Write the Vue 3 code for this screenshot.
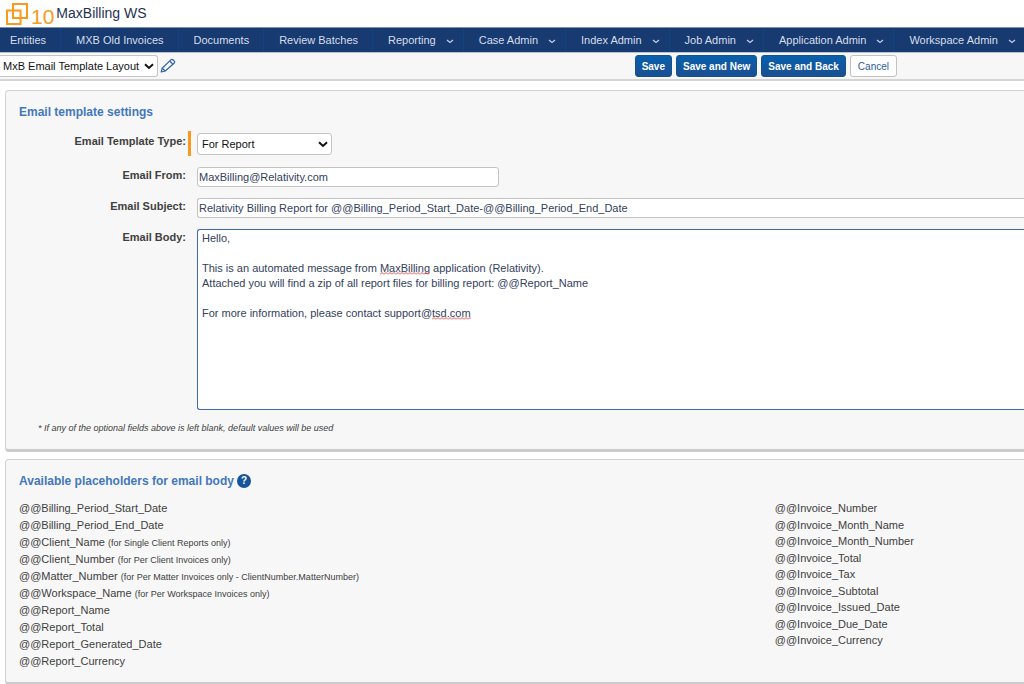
<script setup>
import { ref } from 'vue'

const tabs = [
  { name: 'Entities' },
  { name: 'MXB Old Invoices' },
  { name: 'Documents' },
  { name: 'Review Batches' },
  { name: 'Reporting', menu: true },
  { name: 'Case Admin', menu: true },
  { name: 'Index Admin', menu: true },
  { name: 'Job Admin', menu: true },
  { name: 'Application Admin', menu: true },
  { name: 'Workspace Admin', menu: true }
]

const layout = ref('MxB Email Template Layout')
const templateType = ref('For Report')
const from = ref('MaxBilling@Relativity.com')
const subject = ref('Relativity Billing Report for @@Billing_Period_Start_Date-@@Billing_Period_End_Date')
const body = ref(`Hello,

This is an automated message from MaxBilling application (Relativity).
Attached you will find a zip of all report files for billing report: @@Report_Name

For more information, please contact support@tsd.com`)

const general = [
  { name: '@@Billing_Period_Start_Date' },
  { name: '@@Billing_Period_End_Date' },
  { name: '@@Client_Name', note: '(for Single Client Reports only)' },
  { name: '@@Client_Number', note: '(for Per Client Invoices only)' },
  { name: '@@Matter_Number', note: '(for Per Matter Invoices only - ClientNumber.MatterNumber)' },
  { name: '@@Workspace_Name', note: '(for Per Workspace Invoices only)' },
  { name: '@@Report_Name' },
  { name: '@@Report_Total' },
  { name: '@@Report_Generated_Date' },
  { name: '@@Report_Currency' }
]
const invoice = [
  '@@Invoice_Number',
  '@@Invoice_Month_Name',
  '@@Invoice_Month_Number',
  '@@Invoice_Total',
  '@@Invoice_Tax',
  '@@Invoice_Subtotal',
  '@@Invoice_Issued_Date',
  '@@Invoice_Due_Date',
  '@@Invoice_Currency'
]
</script>

<template>
  <div class="page">
    <header class="brand">
      <svg class="logo" width="24" height="24" viewBox="0 0 24 24" aria-hidden="true">
        <g fill="none" stroke="#f79a1e" stroke-width="2">
          <path d="M8 2h14v14H8z" />
          <path d="M2 8.500h13.500V22H2z" />
        </g>
      </svg>
      <span class="version">10</span>
      <h1 class="workspace">MaxBilling WS</h1>
    </header>

    <nav class="tabs">
      <a v-for="tab in tabs" :key="tab.name" href="#" class="tab">
        {{ tab.name }}
        <svg v-if="tab.menu" class="caret" width="8" height="5" viewBox="0 0 8 5" aria-hidden="true">
          <path d="M1 1l3 2.500L7 1" fill="none" stroke="#c6d2e6" stroke-width="1.200" />
        </svg>
      </a>
    </nav>

    <div class="toolbar">
      <span class="pick layout-pick">
        <select v-model="layout" aria-label="Layout">
          <option>MxB Email Template Layout</option>
        </select>
        <svg class="arrow" width="10" height="7" viewBox="0 0 10 7" aria-hidden="true">
          <path d="M1 1.300l4 3.700 4-3.700" fill="none" stroke="#111" stroke-width="2" />
        </svg>
      </span>
      <button type="button" class="edit" aria-label="Edit layout">
        <svg width="16" height="16" viewBox="0 0 16 16" aria-hidden="true">
          <g fill="none" stroke="#2f62a8" stroke-width="1.200" stroke-linejoin="round">
            <path d="M1.200 14l1-3.800L10.800 1.900q1.200-1 2.400.1l.8.8q1.200 1.200.1 2.400L5.200 13z" />
            <path d="M9.800 3l3.200 3.300M2.200 10.200l3 2.800" />
          </g>
        </svg>
      </button>
      <div class="actions">
        <button type="button" class="btn primary">Save</button>
        <button type="button" class="btn primary">Save and New</button>
        <button type="button" class="btn primary">Save and Back</button>
        <button type="button" class="btn">Cancel</button>
      </div>
    </div>

    <main>
      <section class="panel">
        <h2>Email template settings</h2>
        <form class="form" @submit.prevent>
          <label for="type" class="required-label">Email Template Type:</label>
          <div class="field required">
            <span class="pick type-pick">
              <select id="type" v-model="templateType">
                <option>For Report</option>
              </select>
              <svg class="arrow" width="10" height="7" viewBox="0 0 10 7" aria-hidden="true">
                <path d="M1 1.300l4 3.700 4-3.700" fill="none" stroke="#111" stroke-width="2" />
              </svg>
            </span>
          </div>

          <label for="from">Email From:</label>
          <div class="field"><input id="from" v-model="from" class="short" type="text" /></div>

          <label for="subject">Email Subject:</label>
          <div class="field"><input id="subject" v-model="subject" class="bleed" type="text" /></div>

          <label for="body">Email Body:</label>
          <div class="field editor">
            <textarea id="body" v-model="body" class="bleed" spellcheck="false"></textarea>
            <svg class="squiggle word-one" width="50" height="3" aria-hidden="true">
              <defs>
                <pattern id="wave" width="4" height="3" patternUnits="userSpaceOnUse">
                  <path d="M0 2.500L2 .5l2 2" fill="none" stroke="#f04a4a" stroke-width="1" />
                </pattern>
              </defs>
              <rect width="50" height="3" fill="url(#wave)" />
            </svg>
            <svg class="squiggle word-two" width="39" height="3" aria-hidden="true">
              <rect width="39" height="3" fill="url(#wave)" />
            </svg>
          </div>
        </form>
        <p class="hint">* If any of the optional fields above is left blank, default values will be used</p>
      </section>

      <section class="panel placeholders">
        <h2>
          Available placeholders for email body
          <button type="button" class="help" aria-label="Help">?</button>
        </h2>
        <div class="columns">
          <ul>
            <li v-for="item in general" :key="item.name">
              {{ item.name }} <small v-if="item.note">{{ item.note }}</small>
            </li>
          </ul>
          <ul class="even">
            <li v-for="name in invoice" :key="name">{{ name }}</li>
          </ul>
        </div>
      </section>
    </main>
  </div>
</template>

<style>
body {
  background: #fff;
}
</style>

<style scoped>
.page,
.page * {
  box-sizing: border-box;
}
.page {
  overflow: hidden;
  font-family: "Liberation Sans", Arial, sans-serif;
  font-size: 11px;
  color: #404040;
}
button,
input,
select,
textarea {
  font: inherit;
}

.brand {
  display: flex;
  align-items: flex-start;
  height: 27px;
  padding-left: 5px;
}
.logo {
  margin-top: 2px;
}
.version {
  margin: 5px 2px 0;
  font-size: 21px;
  line-height: 24px;
  color: #f79a1e;
}
.workspace {
  margin: 4px 0 0;
  font-size: 14px;
  line-height: 18px;
  font-weight: 400;
  color: #1f3252;
}

.tabs {
  display: flex;
  height: 26px;
  overflow: hidden;
  background: #173a70;
  border-top: 1px solid #7d8fb0;
  border-bottom: 1px solid #b6c0d0;
}
.tab {
  display: flex;
  flex: none;
  align-items: center;
  gap: 10px;
  padding: 0 14px 0 15px;
  border-right: 1px solid #0b4584;
  color: #d6deec;
  text-decoration: none;
  white-space: nowrap;
}
.tab:first-child {
  padding-left: 10px;
}
.tab:has(.caret) {
  padding-right: 9px;
}
.caret {
  margin-top: 2px;
}

.toolbar {
  display: flex;
  align-items: center;
  height: 28px;
  background: #f7f7f7;
  border-bottom: 2px solid #d4d4d4;
}
.pick {
  position: relative;
  display: inline-block;
}
.pick select {
  display: block;
  width: 100%;
  height: 22px;
  padding: 0 16px 0 4px;
  appearance: none;
  background: #fff;
  border: 1px solid #c4c4c4;
  border-radius: 3px;
  color: #111;
}
.arrow {
  position: absolute;
  top: 8px;
  right: 4px;
  pointer-events: none;
}
.layout-pick {
  width: 158px;
}
.layout-pick select {
  padding-left: 3px;
  border-left: 0;
  border-radius: 0 3px 3px 0;
}
.edit {
  display: flex;
  margin-left: 2px;
  padding: 0;
  background: none;
  border: 0;
}
.actions {
  display: flex;
  gap: 4px;
  margin-left: auto;
  margin-right: 127px;
}
.btn {
  height: 22px;
  padding: 0 7px;
  background: #fff;
  border: 1px solid #c2c2c2;
  border-radius: 3px;
  font-size: 10px;
  color: #2c5a9c;
}
.primary {
  padding: 0 6px;
  background: linear-gradient(#0860ad, #1a4f92);
  border-color: #17518f;
  font-weight: 700;
  color: #fff;
}

main {
  display: flex;
  flex-direction: column;
  gap: 7px;
  padding: 9px 0 0 5px;
}
.panel {
  padding: 13px 0 15px 13px;
  background: #f7f7f7;
  border: 1px solid #d2d2d2;
  border-right: 0;
  border-bottom: 3px solid #cbcbcb;
  border-radius: 4px 0 0 4px;
}
.placeholders {
  padding-bottom: 12px;
}
h2 {
  display: flex;
  align-items: center;
  gap: 3px;
  margin: 0;
  font-size: 12px;
  line-height: 16px;
  color: #4377bd;
}

.form {
  display: grid;
  grid-template-columns: 167px 1fr;
  column-gap: 2px;
  row-gap: 11px;
  margin-top: 11px;
}
.form label {
  padding-top: 1px;
  font-weight: 700;
  line-height: 14px;
  text-align: right;
}
.form .required-label {
  padding-top: 3px;
}
.field {
  padding-left: 9px;
}
.required {
  padding: 2px 0 1px 6px;
  border-left: 3px solid #f79a1e;
}
.type-pick {
  display: block;
  width: 135px;
}
.field input {
  display: block;
  height: 20px;
  padding: 0 1px;
  background: #fff;
  border: 1px solid #c4c4c4;
  border-radius: 3px;
  color: #33415c;
}
.field .short {
  width: 302px;
}
.field .bleed {
  width: 100%;
  border-right: 0;
  border-radius: 3px 0 0 3px;
}
.editor {
  position: relative;
}
textarea {
  display: block;
  height: 181px;
  padding: 1px 4px;
  resize: none;
  background: #fff;
  border: 1px solid #3e68b0;
  outline: 0;
  line-height: 15px;
  color: #33415c;
}
.squiggle {
  position: absolute;
  pointer-events: none;
}
.word-one {
  top: 43px;
  left: 192px;
}
.word-two {
  top: 88px;
  left: 244px;
}
.hint {
  margin: 12px 0 0 19px;
  font-size: 9px;
  line-height: 12px;
  font-style: italic;
}

.help {
  width: 14px;
  height: 14px;
  padding: 0;
  background: #17539a;
  border: 0;
  border-radius: 50%;
  font-size: 10px;
  font-weight: 700;
  line-height: 14px;
  color: #fff;
}
.columns {
  display: grid;
  grid-template-columns: 3fr 1fr;
  column-gap: 8px;
  align-items: start;
  margin-top: 11px;
}
ul {
  margin: 0;
  padding: 0;
  list-style: none;
  line-height: 17px;
}
.even {
  display: grid;
  grid-auto-rows: 1fr;
  height: 149px;
}
.even li {
  min-height: 0;
}
small {
  font-size: 9px;
  line-height: 1;
}
</style>
